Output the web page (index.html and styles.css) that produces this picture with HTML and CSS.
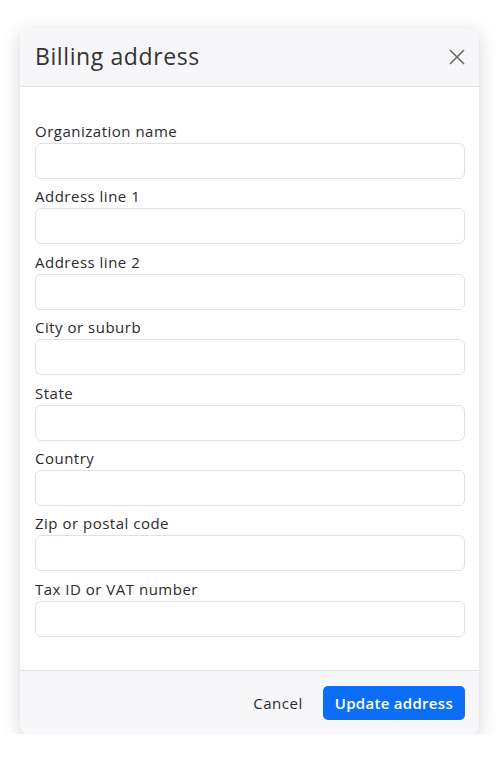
FILE: index.html
```html
<!DOCTYPE html>
<html lang="en">
<head>
    <meta charset="UTF-8">
    <meta name="viewport" content="width=device-width, initial-scale=1.0">
    <title>Billing address</title>
    <link rel="stylesheet" href="styles.css">
</head>
<body>
    <div class="modal">
        <div class="modal-header">
            <h1 class="modal-title">Billing address</h1>
            <button class="close" aria-label="Close">
                <svg width="16" height="16" viewBox="0 0 16 16">
                    <path d="M1 1 L15 15 M15 1 L1 15" stroke="#6b6b6b" stroke-width="1.6" fill="none"/>
                </svg>
            </button>
        </div>
        <div class="modal-body">
            <div class="field">
                <label>Organization name</label>
                <input type="text">
            </div>
            <div class="field">
                <label>Address line 1</label>
                <input type="text">
            </div>
            <div class="field">
                <label>Address line 2</label>
                <input type="text">
            </div>
            <div class="field">
                <label>City or suburb</label>
                <input type="text">
            </div>
            <div class="field">
                <label>State</label>
                <input type="text">
            </div>
            <div class="field">
                <label>Country</label>
                <input type="text">
            </div>
            <div class="field">
                <label>Zip or postal code</label>
                <input type="text">
            </div>
            <div class="field">
                <label>Tax ID or VAT number</label>
                <input type="text">
            </div>
        </div>
        <div class="modal-footer">
            <button class="btn-cancel">Cancel</button>
            <button class="btn-primary">Update address</button>
        </div>
    </div>
</body>
</html>
```

FILE: styles.css
```css
body {
    margin: 0;
    background: #ffffff;
    font-family: "Open Sans", Arial, sans-serif;
    color: #2b2b2b;
}
.modal {
    width: 459px;
    margin: 28px 0 0 20px;
    background: #ffffff;
    border-radius: 8px;
    box-shadow: 0 5px 18px rgba(40, 45, 60, 0.2);
    overflow: hidden;
}
.modal-header {
    display: flex;
    align-items: center;
    justify-content: space-between;
    height: 58px;
    padding: 0 14px 0 15px;
    background: #f7f7f9;
    border-bottom: 1px solid #e3e4e8;
}
.modal-title {
    margin: 0 0 3px;
    font-size: 23px;
    font-weight: 500;
    letter-spacing: 0.6px;
    color: #333333;
}
.close {
    border: none;
    background: none;
    padding: 0;
    display: flex;
    cursor: pointer;
}
.modal-body {
    padding: 33px 14px 27px 15px;
}
.field {
    display: flex;
    flex-direction: column;
    margin-bottom: 6.4px;
}
.field label {
    font-size: 15px;
    line-height: 22px;
    letter-spacing: 0.5px;
    margin-bottom: 1px;
    color: #2b2b2b;
}
.field input {
    height: 36px;
    box-sizing: border-box;
    border: 1px solid #dfe1e6;
    border-radius: 6px;
    font-size: 15px;
    padding: 0 10px;
}
.modal-footer {
    display: flex;
    justify-content: flex-end;
    align-items: center;
    gap: 12px;
    height: 63px;
    padding: 0 14px;
    background: #f7f7f9;
    border-top: 1px solid #e3e4e8;
}
.btn-cancel {
    border: none;
    background: none;
    font-family: inherit;
    font-size: 15px;
    letter-spacing: 0.5px;
    color: #2b2b2b;
    padding: 0 8px;
}
.btn-primary {
    border: none;
    background: #0b6ef5;
    color: #ffffff;
    font-family: inherit;
    font-size: 15px;
    font-weight: 600;
    letter-spacing: 0.3px;
    height: 34px;
    padding: 0 12px;
    border-radius: 5px;
}
```
